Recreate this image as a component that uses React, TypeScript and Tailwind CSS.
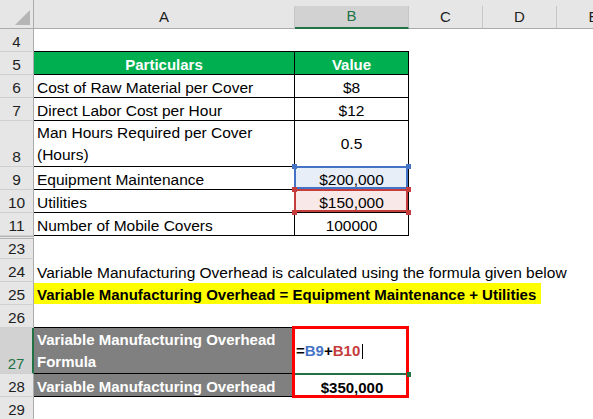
import React from 'react'

type HeadProps = { n: number; tall?: boolean; active?: boolean; gap?: boolean }

function RowHead({ n, tall, active, gap }: HeadProps) {
  const h = tall ? 'h-[46px]' : 'h-[23px]'
  const tone = active
    ? 'bg-[#d2d2d2] text-[#217346] border-r-2 border-r-[#217346]'
    : 'bg-[#e6e6e6] text-[#1e1e1e] border-r border-r-[#ababab]'
  const top = gap ? 'border-t-[3px] border-t-[#b4b4b4] border-double' : ''
  return (
    <div className={`${h} ${tone} ${top} w-[34px] shrink-0 flex items-end justify-center leading-[18px] border-b border-b-[#cfcfcf]`}>
      {n}
    </div>
  )
}

function ColHead({ w, active, children }: { w: string; active?: boolean; children: React.ReactNode }) {
  const tone = active
    ? 'bg-[#d2d2d2] text-[#217346] border-b-2 border-b-[#217346]'
    : 'text-[#1e1e1e] border-b border-b-[#ababab]'
  return (
    <div className={`${w} ${tone} shrink-0 h-[23px] flex items-center justify-center border-r border-r-[#c6c6c6]`}>
      {children}
    </div>
  )
}

// range highlight shown while editing a formula (B9 blue, B10 red)
function RefFrame({ color }: { color: 'blue' | 'red' }) {
  const line = color === 'blue' ? 'border-[#4472c4]' : 'border-[#c43c3c]'
  const dot = color === 'blue' ? 'bg-[#4472c4]' : 'bg-[#c43c3c]'
  return (
    <>
      <div className={`absolute -top-[1px] -left-[1px] right-0 bottom-0 border-2 ${line}`} />
      <div className={`absolute -left-[3px] -top-[3px] w-[5px] h-[5px] ${dot}`} />
      <div className={`absolute left-[111px] -top-[3px] w-[5px] h-[5px] ${dot}`} />
      <div className={`absolute -left-[3px] top-[20px] w-[5px] h-[5px] ${dot}`} />
      <div className={`absolute left-[111px] top-[20px] w-[5px] h-[5px] ${dot}`} />
    </>
  )
}

const cellA = 'w-[261px] shrink-0 px-[3px] flex leading-[18px]'
const cellB = 'w-[114px] shrink-0 flex justify-center leading-[18px]'
const boxed = 'border-r border-b border-black'

export default function App() {
  return (
    <div className="w-[593px] h-[419px] overflow-hidden bg-white font-['Liberation_Sans',Arial,sans-serif] text-[15.5px] text-black">
      {/* column headers */}
      <div className="flex h-[29px] items-end bg-[#e6e6e6] text-[15px]">
        <div className="relative w-[34px] h-[29px] shrink-0 border-r border-b border-[#ababab]">
          <svg className="absolute left-[15px] top-[10px]" width="16" height="16" viewBox="0 0 16 16">
            <polygon points="15,0 15,15 0,15" fill="#b5b5b5" />
          </svg>
        </div>
        <ColHead w="w-[261px]">A</ColHead>
        <ColHead w="w-[114px]" active>B</ColHead>
        <ColHead w="w-[74px]">C</ColHead>
        <ColHead w="w-[74px]">D</ColHead>
        <ColHead w="w-[74px]">E</ColHead>
      </div>

      {/* row 4 */}
      <div className="flex h-[23px] text-[15px]">
        <RowHead n={4} />
        <div className={`${cellA} border-b border-black`} />
        <div className={`${cellB} border-b border-black`} />
      </div>

      {/* row 5 - table header */}
      <div className="flex h-[23px]">
        <RowHead n={5} />
        <div className={`${cellA} ${boxed} items-end justify-center bg-[#00b050] text-white font-bold text-[15px]`}>Particulars</div>
        <div className={`${cellB} ${boxed} items-end bg-[#00b050] text-white font-bold text-[15px]`}>Value</div>
      </div>

      <div className="flex h-[23px]">
        <RowHead n={6} />
        <div className={`${cellA} ${boxed} items-end`}>Cost of Raw Material per Cover</div>
        <div className={`${cellB} ${boxed} items-end`}>$8</div>
      </div>

      <div className="flex h-[23px]">
        <RowHead n={7} />
        <div className={`${cellA} ${boxed} items-end`}>Direct Labor Cost per Hour</div>
        <div className={`${cellB} ${boxed} items-end`}>$12</div>
      </div>

      <div className="flex h-[46px]">
        <RowHead n={8} tall />
        <div className={`${cellA} ${boxed} items-end leading-[22px]`}>
          <div>
            Man Hours Required per Cover
            <br />
            (Hours)
          </div>
        </div>
        <div className={`${cellB} ${boxed} items-center`}>0.5</div>
      </div>

      <div className="flex h-[23px]">
        <RowHead n={9} />
        <div className={`${cellA} ${boxed} items-end`}>Equipment Maintenance</div>
        <div className={`${cellB} ${boxed} items-end relative bg-[#e8eef8]`}>
          $200,000
          <RefFrame color="blue" />
        </div>
      </div>

      <div className="flex h-[23px]">
        <RowHead n={10} />
        <div className={`${cellA} ${boxed} items-end`}>Utilities</div>
        <div className={`${cellB} ${boxed} items-end relative bg-[#f9e8e8]`}>
          $150,000
          <RefFrame color="red" />
        </div>
      </div>

      <div className="flex h-[23px]">
        <RowHead n={11} />
        <div className={`${cellA} ${boxed} items-end`}>Number of Mobile Covers</div>
        <div className={`${cellB} ${boxed} items-end`}>100000</div>
      </div>

      <div className="flex h-[23px]">
        <RowHead n={23} gap />
      </div>

      <div className="flex h-[23px]">
        <RowHead n={24} />
        <div className={`${cellA} items-end whitespace-nowrap`}>
          Variable Manufacturing Overhead is calculated using the formula given below
        </div>
      </div>

      <div className="flex h-[23px]">
        <RowHead n={25} />
        <div className="flex items-center">
          <div className="w-[507px] h-[21px] bg-[#ffff00] px-[3px] flex items-end leading-[18px] font-bold text-[15px] whitespace-nowrap">
            Variable Manufacturing Overhead = Equipment Maintenance + Utilities
          </div>
        </div>
      </div>

      <div className="flex h-[23px]">
        <RowHead n={26} />
        <div className={`${cellA} border-b border-black`} />
      </div>

      {/* result block */}
      <div className="flex h-[46px] text-[15px]">
        <RowHead n={27} tall active />
        <div className={`${cellA} ${boxed} items-end bg-[#808080] text-white font-bold leading-[22px]`}>
          <div>
            Variable Manufacturing Overhead
            <br />
            Formula
          </div>
        </div>
        <div className="w-[114px] shrink-0 relative flex items-center pl-[1px] leading-[18px] font-bold">
          <span>=</span>
          <span className="text-[#4472c4]">B9</span>
          <span>+</span>
          <span className="text-[#c43c3c]">B10</span>
          <span className="inline-block w-[1px] h-[15px] bg-black ml-[2px]" />
          <div className="absolute left-0 right-[1px] -bottom-[1px] h-[2px] bg-[#217346]" />
          <div className="absolute z-20 -left-[3px] -top-[2px] w-[117px] h-[72px] border-[3px] border-[#ff0000]" />
          <div className="absolute z-30 left-[112px] -bottom-[3px] w-[4px] h-[5px] bg-[#217346]" />
        </div>
      </div>

      <div className="flex h-[23px] text-[15px]">
        <RowHead n={28} />
        <div className={`${cellA} ${boxed} items-end bg-[#808080] text-white font-bold`}>Variable Manufacturing Overhead</div>
        <div className={`${cellB} items-end font-bold`}>$350,000</div>
      </div>

      <div className="flex h-[23px] text-[15px]">
        <RowHead n={29} />
      </div>
    </div>
  )
}
